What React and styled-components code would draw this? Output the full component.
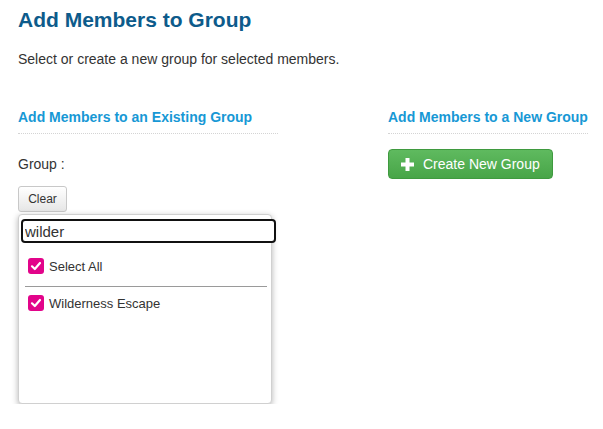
import React, { useState } from "react";
import styled, { createGlobalStyle } from "styled-components";

const GlobalStyle = createGlobalStyle`
  body {
    margin: 0;
    background: #fff;
    font-family: "Liberation Sans", Arial, sans-serif;
    color: #333;
  }
`;

const Page = styled.div`
  padding: 8px 18px 0 18px;
`;

const Title = styled.h1`
  margin: 0;
  font-size: 21px;
  line-height: 24px;
  font-weight: bold;
  color: #0d5b8b;
`;

const Intro = styled.p`
  margin: 17px 0 0 0;
  font-size: 14px;
  line-height: 20px;
`;

const Columns = styled.div`
  display: flex;
  gap: 110px;
  margin-top: 38px;
`;

const Column = styled.div`
  flex: none;
  width: ${(p) => p.$width}px;
  display: flex;
  flex-direction: column;
`;

const SectionTitle = styled.h3`
  margin: 0;
  font-size: 14px;
  line-height: 20px;
  font-weight: bold;
  color: #1798d5;
  padding-bottom: 6px;
  border-bottom: 1px dotted #d4d4d4;
  white-space: nowrap;
`;

const Label = styled.div`
  margin-top: 20px;
  font-size: 14px;
  line-height: 20px;
`;

const ClearButton = styled.button`
  margin-top: 12px;
  width: 49px;
  height: 26px;
  padding: 0;
  font-family: inherit;
  font-size: 12px;
  color: #333;
  background: linear-gradient(#ffffff, #e6e6e6);
  border: 1px solid #c8c8c8;
  border-radius: 3px;
`;

const Dropdown = styled.div`
  margin-top: 2px;
  width: 254px;
  height: 190px;
  background: #fff;
  border: 1px solid #d0d0d0;
  border-radius: 4px;
  box-shadow: 0 2px 6px rgba(0, 0, 0, 0.3);
  box-sizing: border-box;
  padding: 4px 0 0 2px;
`;

const Search = styled.input`
  display: block;
  box-sizing: border-box;
  width: 255px;
  height: 24px;
  padding: 0 2px;
  font-family: inherit;
  font-size: 15px;
  color: #333;
  border: 2px solid #111;
  border-radius: 4px;
  outline: none;
`;

const Option = styled.label`
  display: flex;
  align-items: center;
  gap: 5px;
  height: 20px;
  margin: ${(p) => p.$margin};
  padding-left: 7px;
  font-size: 13px;
  color: #333;
`;

const Box = styled.span`
  width: 16px;
  height: 16px;
  border-radius: 3px;
  background: #e2048a;
  display: flex;
  align-items: center;
  justify-content: center;
`;

const Divider = styled.hr`
  margin: 0 4px;
  border: none;
  border-top: 1px solid #9a9a9a;
`;

const CreateButton = styled.button`
  margin-top: 15px;
  align-self: flex-start;
  height: 30px;
  display: flex;
  align-items: center;
  gap: 9px;
  padding: 0 12px 0 12px;
  font-family: inherit;
  font-size: 14px;
  color: #fff;
  background: linear-gradient(#5fba5f, #48a548);
  border: 1px solid #3f9a3f;
  border-radius: 4px;
`;

const Check = () => (
  <svg width="12" height="12" viewBox="0 0 12 12">
    <path
      d="M2 6.3 L4.8 9 L10 3"
      fill="none"
      stroke="#fff"
      strokeWidth="2.2"
      strokeLinecap="round"
      strokeLinejoin="round"
    />
  </svg>
);

const Plus = () => (
  <svg width="13" height="13" viewBox="0 0 13 13">
    <rect x="4.5" y="0" width="4" height="13" fill="#fff" />
    <rect x="0" y="4.5" width="13" height="4" fill="#fff" />
  </svg>
);

const App = () => {
  const [search, setSearch] = useState("wilder");
  const options = ["Wilderness Escape"];

  return (
    <>
      <GlobalStyle />
      <Page>
        <Title>Add Members to Group</Title>
        <Intro>Select or create a new group for selected members.</Intro>
        <Columns>
          <Column $width={260}>
            <SectionTitle>Add Members to an Existing Group</SectionTitle>
            <Label>Group :</Label>
            <div>
              <ClearButton>Clear</ClearButton>
            </div>
            <Dropdown>
              <Search
                value={search}
                onChange={(e) => setSearch(e.target.value)}
              />
              <Option $margin="13px 0 10px 0">
                <Box>
                  <Check />
                </Box>
                Select All
              </Option>
              <Divider />
              <Option $margin="6px 0 0 0">
                <Box>
                  <Check />
                </Box>
                {options[0]}
              </Option>
            </Dropdown>
          </Column>
          <Column $width={200}>
            <SectionTitle>Add Members to a New Group</SectionTitle>
            <CreateButton>
              <Plus />
              Create New Group
            </CreateButton>
          </Column>
        </Columns>
      </Page>
    </>
  );
};

export default App;
